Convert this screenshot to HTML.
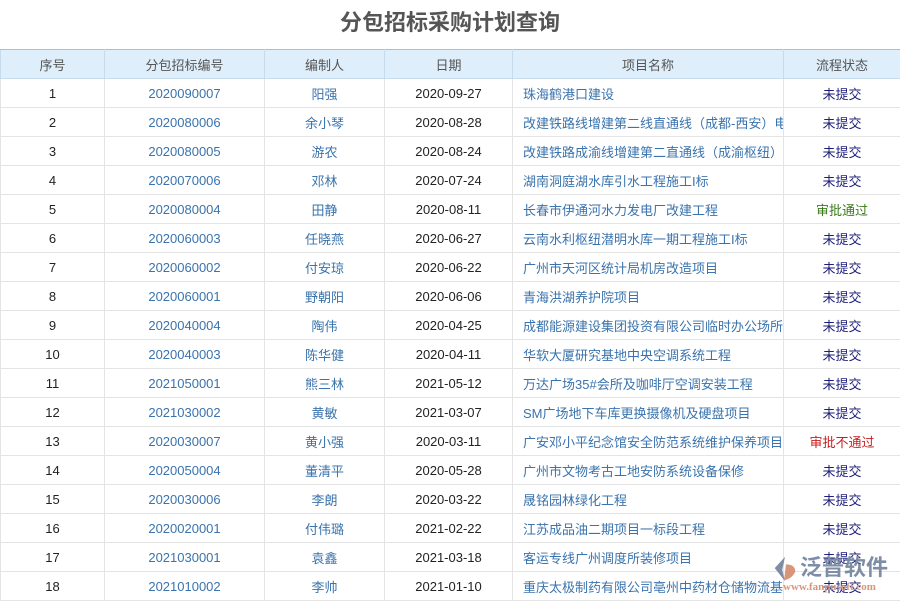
<!DOCTYPE html>
<html><head><meta charset="utf-8"><style>
*{margin:0;padding:0;box-sizing:border-box}
body{width:900px;height:600px;overflow:hidden;background:#fff;font-family:"Liberation Sans","Noto Sans CJK SC",sans-serif;position:relative}
h1{height:49px;line-height:46px;text-align:center;font-size:22px;font-weight:bold;color:#555}
table{border-collapse:collapse;table-layout:fixed;width:900px}
th{height:29px;background:#deeefa;color:#555;font-weight:normal;font-size:13px;border:1px solid #c6dced;border-top:1px solid #9cc4df}
td{height:29px;font-size:13px;text-align:center;border:1px solid #e4e4e4;color:#222;white-space:nowrap;overflow:hidden}
td.l{color:#3a73ad}
td.n{text-align:left;padding-left:10px;color:#3a73ad;text-overflow:clip}
td.s{color:#1e1e7a}
td.g{color:#3a7a1a}
td.r{color:#c81e1e}
.logo{position:absolute;left:800px;top:554px;font-size:22px;line-height:28px;color:#7d8da5;font-weight:bold;white-space:nowrap}
.url{position:absolute;left:783px;top:581px;font-size:11px;color:#d9957a;font-family:"Liberation Serif",serif;font-weight:bold;white-space:nowrap}
</style></head><body>
<h1>分包招标采购计划查询</h1>
<table>
<colgroup><col style="width:104px"><col style="width:160px"><col style="width:120px"><col style="width:128px"><col style="width:271px"><col style="width:117px"></colgroup>
<tr><th>序号</th><th>分包招标编号</th><th>编制人</th><th>日期</th><th>项目名称</th><th>流程状态</th></tr>
<tr><td>1</td><td class="l">2020090007</td><td class="l">阳强</td><td>2020-09-27</td><td class="n">珠海鹤港口建设</td><td class="s">未提交</td></tr>
<tr><td>2</td><td class="l">2020080006</td><td class="l">余小琴</td><td>2020-08-28</td><td class="n">改建铁路线增建第二线直通线（成都-西安）电</td><td class="s">未提交</td></tr>
<tr><td>3</td><td class="l">2020080005</td><td class="l">游农</td><td>2020-08-24</td><td class="n">改建铁路成渝线增建第二直通线（成渝枢纽）</td><td class="s">未提交</td></tr>
<tr><td>4</td><td class="l">2020070006</td><td class="l">邓林</td><td>2020-07-24</td><td class="n">湖南洞庭湖水库引水工程施工I标</td><td class="s">未提交</td></tr>
<tr><td>5</td><td class="l">2020080004</td><td class="l">田静</td><td>2020-08-11</td><td class="n">长春市伊通河水力发电厂改建工程</td><td class="g">审批通过</td></tr>
<tr><td>6</td><td class="l">2020060003</td><td class="l">任晓燕</td><td>2020-06-27</td><td class="n">云南水利枢纽潜明水库一期工程施工I标</td><td class="s">未提交</td></tr>
<tr><td>7</td><td class="l">2020060002</td><td class="l">付安琼</td><td>2020-06-22</td><td class="n">广州市天河区统计局机房改造项目</td><td class="s">未提交</td></tr>
<tr><td>8</td><td class="l">2020060001</td><td class="l">野朝阳</td><td>2020-06-06</td><td class="n">青海洪湖养护院项目</td><td class="s">未提交</td></tr>
<tr><td>9</td><td class="l">2020040004</td><td class="l">陶伟</td><td>2020-04-25</td><td class="n">成都能源建设集团投资有限公司临时办公场所</td><td class="s">未提交</td></tr>
<tr><td>10</td><td class="l">2020040003</td><td class="l">陈华健</td><td>2020-04-11</td><td class="n">华软大厦研究基地中央空调系统工程</td><td class="s">未提交</td></tr>
<tr><td>11</td><td class="l">2021050001</td><td class="l">熊三林</td><td>2021-05-12</td><td class="n">万达广场35#会所及咖啡厅空调安装工程</td><td class="s">未提交</td></tr>
<tr><td>12</td><td class="l">2021030002</td><td class="l">黄敏</td><td>2021-03-07</td><td class="n">SM广场地下车库更换摄像机及硬盘项目</td><td class="s">未提交</td></tr>
<tr><td>13</td><td class="l">2020030007</td><td class="l">黄小强</td><td>2020-03-11</td><td class="n">广安邓小平纪念馆安全防范系统维护保养项目</td><td class="r">审批不通过</td></tr>
<tr><td>14</td><td class="l">2020050004</td><td class="l">董清平</td><td>2020-05-28</td><td class="n">广州市文物考古工地安防系统设备保修</td><td class="s">未提交</td></tr>
<tr><td>15</td><td class="l">2020030006</td><td class="l">李朗</td><td>2020-03-22</td><td class="n">晟铭园林绿化工程</td><td class="s">未提交</td></tr>
<tr><td>16</td><td class="l">2020020001</td><td class="l">付伟璐</td><td>2021-02-22</td><td class="n">江苏成品油二期项目一标段工程</td><td class="s">未提交</td></tr>
<tr><td>17</td><td class="l">2021030001</td><td class="l">袁鑫</td><td>2021-03-18</td><td class="n">客运专线广州调度所装修项目</td><td class="s">未提交</td></tr>
<tr><td>18</td><td class="l">2021010002</td><td class="l">李帅</td><td>2021-01-10</td><td class="n">重庆太极制药有限公司亳州中药材仓储物流基</td><td class="s">未提交</td></tr>
</table>
<svg style="position:absolute;left:771px;top:555px" width="28" height="28" viewBox="0 0 30 30"><path d="M15 2 L4 14 L15 28 L12 16 Z" fill="#7d8da5"/><path d="M16 10 Q26 10 26 18 Q22 26 14 27 Z" fill="#d9957a"/></svg>
<div class="logo">泛普软件</div>
<div class="url">www.fanpusoft.com</div>
</body></html>
